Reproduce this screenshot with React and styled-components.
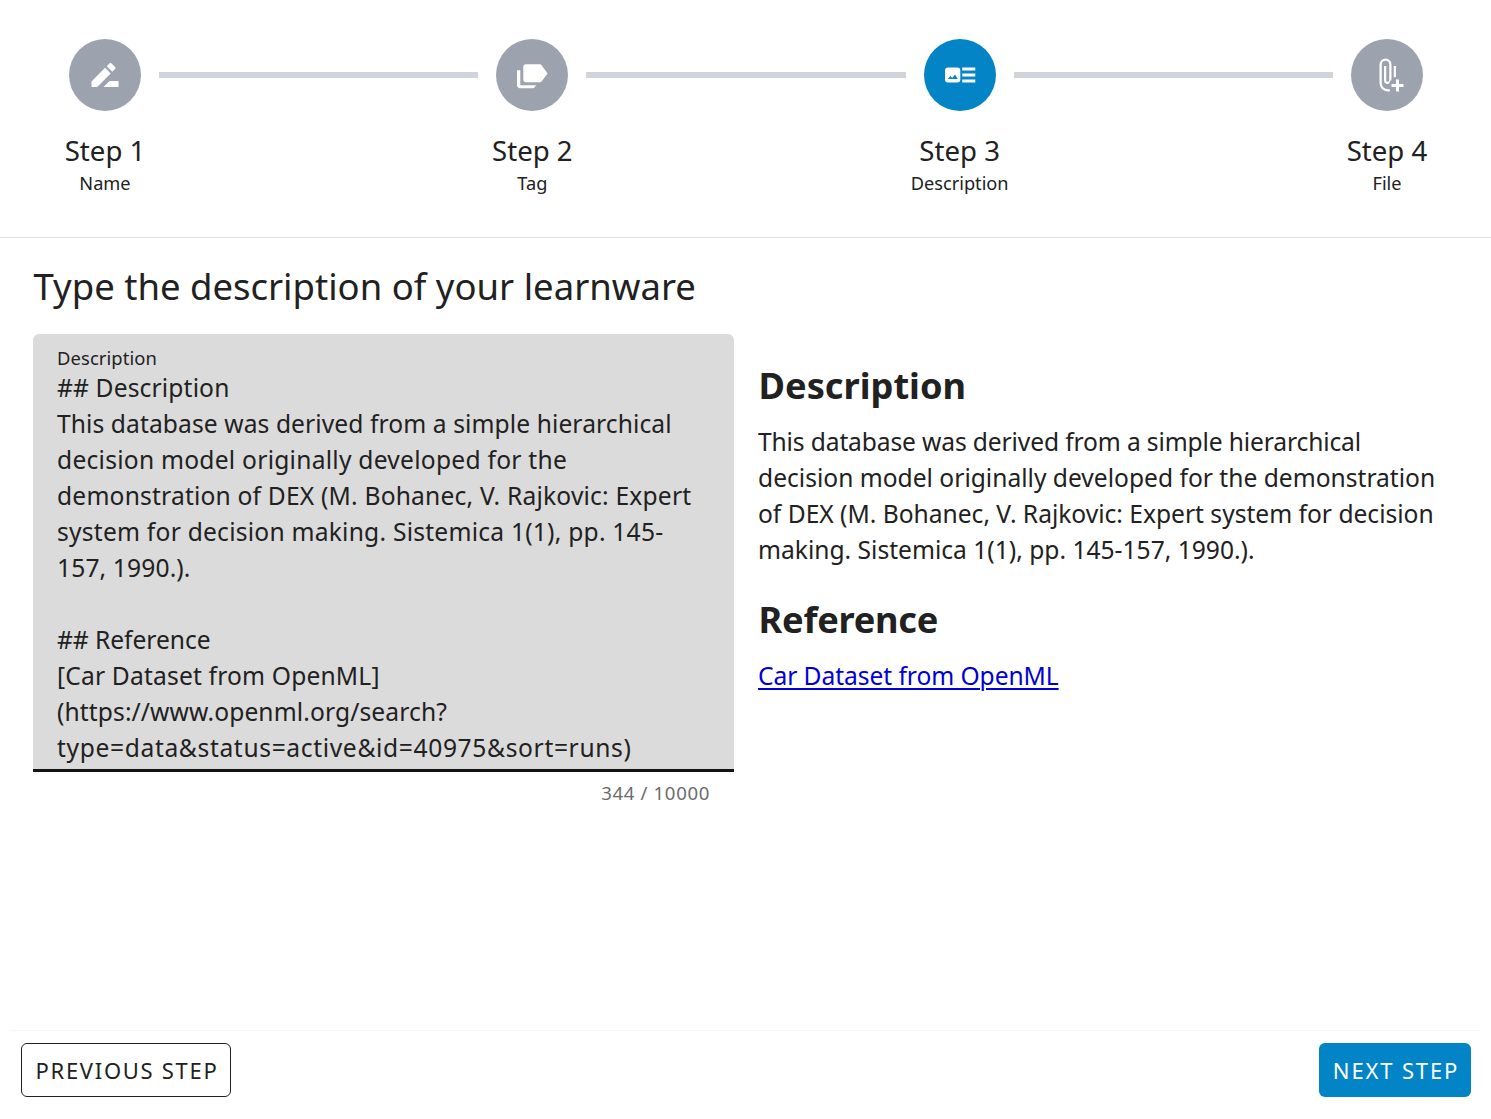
import React from "react";
import styled, { createGlobalStyle } from "styled-components";

const GlobalStyle = createGlobalStyle`
  *, *::before, *::after { box-sizing: border-box; }
  body {
    margin: 0;
    background: #fff;
    color: #212121;
    font-family: "Noto Sans", "Open Sans", sans-serif;
    font-size: 24.6px;
    line-height: 36px;
  }
`;

const Page = styled.div`
  display: flex;
  flex-direction: column;
  height: 1119px;
  overflow: hidden;
`;

const Stepper = styled.header`
  display: flex;
  align-items: flex-start;
  flex: none;
  height: 238px;
  padding: 39px 68px 0 69px;
  border-bottom: 1px solid #dedede;
`;

const Step = styled.div`
  display: flex;
  flex-direction: column;
  align-items: center;
  flex: none;
  width: 72px;
  white-space: nowrap;
`;

const StepCircle = styled.div`
  display: flex;
  align-items: center;
  justify-content: center;
  width: 72px;
  height: 72px;
  margin-bottom: 18px;
  border-radius: 50%;
  color: #fff;
  background: ${(p) => (p.$active ? "#0284c7" : "#9ca3af")};

  svg {
    width: 36px;
    height: 36px;
    fill: currentColor;
  }
`;

const StepTitle = styled.div`
  font-size: 27.6px;
  line-height: 42px;
`;

const StepCaption = styled.div`
  font-size: 18.2px;
  line-height: 24px;
`;

const StepLine = styled.div`
  flex: 1;
  height: 6px;
  margin: 33px 18px 0;
  background: #d1d5db;
`;

const Main = styled.main`
  flex: 1;
  padding: 24px 33px 0;
`;

const Title = styled.h1`
  margin: 0 0 24px;
  padding-left: 0.5px;
  font-size: 36.5px;
  font-weight: 400;
  line-height: 48px;
`;

const Columns = styled.div`
  display: grid;
  grid-template-columns: 701px 1fr;
  column-gap: 24px;
`;

const Field = styled.div`
  height: 438px;
  padding: 12px 24px 0;
  border-bottom: 3px solid #141414;
  border-radius: 6px 6px 0 0;
  background: #dbdbdb;
`;

const FieldLabel = styled.div`
  font-size: 18.4px;
  line-height: 24px;
  letter-spacing: 0.1px;
`;

const Counter = styled.div`
  padding: 9px 24px 0;
  color: #6b6b6b;
  font-size: 18.6px;
  line-height: 24px;
  letter-spacing: 0.65px;
  text-align: right;
`;

const Line = styled.span`
  display: block;
  min-height: 36px;
  letter-spacing: ${(p) => p.$tracking || 0}px;
  white-space: nowrap;
`;

const Preview = styled.article`
  padding-top: 24px;
`;

const PreviewHeading = styled.h2`
  margin: 0 0 12px;
  padding-left: 0.6px;
  font-size: 36.2px;
  font-weight: 700;
  line-height: 54px;
  letter-spacing: ${(p) => p.$tracking || 0}px;
`;

const Paragraph = styled.p`
  margin: 0 0 24px;
`;

const Link = styled.a`
  color: #0000d6;
  letter-spacing: -0.07px;
  text-decoration: underline;
  text-decoration-thickness: 2px;
  text-underline-offset: 3px;
`;

const Footer = styled.footer`
  display: flex;
  justify-content: space-between;
  flex: none;
  height: 89px;
  margin: 0 12px 0 10px;
  padding: 12px 8px 0 11px;
  border-top: 1px solid #f7f7f7;
`;

const Button = styled.button`
  width: ${(p) => p.$width}px;
  height: 54px;
  padding: 0 0 0 2px;
  border: ${(p) => (p.$primary ? "0" : "1px solid #212121")};
  border-radius: 6px;
  color: ${(p) => (p.$primary ? "#fff" : "#212121")};
  background: ${(p) => (p.$primary ? "#0284c7" : "#fff")};
  font-family: inherit;
  font-size: 22px;
  line-height: 36px;
  letter-spacing: ${(p) => (p.$primary ? 1.85 : 1.7)}px;
  white-space: nowrap;
`;

const RenameIcon = () => (
  <svg viewBox="0 0 24 24">
    <path d="M15 16L11 20H21V16H15M12.06 7.19L3 16.25V20H6.75L15.81 10.94L12.06 7.19M18.71 8.04C19.1 7.65 19.1 7 18.71 6.63L16.37 4.29C16.17 4.09 15.92 4 15.66 4C15.41 4 15.15 4.1 14.96 4.29L13.13 6.12L16.88 9.87L18.71 8.04Z" />
  </svg>
);

const LabelsIcon = () => (
  <svg viewBox="0 0 24 24">
    <path d="M7.8 4.9H17.2C17.7 4.9 18.2 5.2 18.5 5.6L22.4 11L18.5 16.2C18.2 16.6 17.7 16.9 17.2 16.9H7.8C6.9 16.9 6.2 16.1 6.2 15.2V6.6C6.2 5.7 6.9 4.9 7.8 4.9Z" />
    <path d="M2 8.8H4.2V18.8H14.9L13.5 20.3Q13 20.8 12.4 20.8H4C2.9 20.8 2 20 2 18.9Z" />
  </svg>
);

const ImageTextIcon = () => (
  <svg viewBox="0 0 24 24">
    <path d="M22.2 13H13.5V11H22.2M22.2 7H13.5V9H22.2M13.5 17H22.2V15H13.5M12.2 9V15A2 2 0 0 1 10.2 17H4A2 2 0 0 1 2 15V9A2 2 0 0 1 4 7H10.2A2 2 0 0 1 12.2 9M10.5 14.7L8.7 11.7L6.8 14L5.6 12.7L3.8 14.7H10.5Z" />
  </svg>
);

const PaperclipPlusIcon = () => (
  <svg viewBox="0 0 24 24">
    <path d="M16.5 6H18V13.1L16.5 13.6Z" />
    <path d="M14.2 22.75Q13.4 23 12.5 23A5.5 5.5 0 0 1 7 17.5V5A4 4 0 0 1 15 5V14.8Q13.8 16 13.3 17.9Q12.9 18 12.5 18A2.5 2.5 0 0 1 10 15.5V6H11.5V15.5A1 1 0 0 0 13.5 15.5V5A2.5 2.5 0 0 0 8.5 5V17.5A4 4 0 0 0 12.5 21.5Q13.1 21.5 13.6 21.35Z" />
    <path d="M18 15H20V18H23V20H20V23H18V20H15V18H18Z" />
  </svg>
);

const steps = [
  { title: "Step 1", caption: "Name", Icon: RenameIcon },
  { title: "Step 2", caption: "Tag", Icon: LabelsIcon },
  { title: "Step 3", caption: "Description", Icon: ImageTextIcon, active: true },
  { title: "Step 4", caption: "File", Icon: PaperclipPlusIcon },
];

const sourceLines = [
  ["## Description", 0.14],
  ["This database was derived from a simple hierarchical", 0.09],
  ["decision model originally developed for the", 0.25],
  ["demonstration of DEX (M. Bohanec, V. Rajkovic: Expert", 0.19],
  ["system for decision making. Sistemica 1(1), pp. 145-", 0.23],
  ["157, 1990.).", 0.13],
  ["", 0],
  ["## Reference", -0.05],
  ["[Car Dataset from OpenML]", 0.17],
  ["(https://www.openml.org/search?", 0.11],
  ["type=data&status=active&id=40975&sort=runs)", 0.64],
];

const previewLines = [
  ["This database was derived from a simple hierarchical", -0.134],
  ["decision model originally developed for the demonstration", 0],
  ["of DEX (M. Bohanec, V. Rajkovic: Expert system for decision", -0.01],
  ["making. Sistemica 1(1), pp. 145-157, 1990.).", 0],
];

const Lines = ({ items }) =>
  items.map(([text, tracking], i) => (
    <Line key={i} $tracking={tracking}>
      {text}
    </Line>
  ));

export default function App() {
  return (
    <Page>
      <GlobalStyle />
      <Stepper>
        {steps.map(({ title, caption, Icon, active }, i) => (
          <React.Fragment key={title}>
            {i > 0 && <StepLine />}
            <Step>
              <StepCircle $active={active}>
                <Icon />
              </StepCircle>
              <StepTitle>{title}</StepTitle>
              <StepCaption>{caption}</StepCaption>
            </Step>
          </React.Fragment>
        ))}
      </Stepper>
      <Main>
        <Title>Type the description of your learnware</Title>
        <Columns>
          <div>
            <Field>
              <FieldLabel>Description</FieldLabel>
              <Lines items={sourceLines} />
            </Field>
            <Counter>344 / 10000</Counter>
          </div>
          <Preview>
            <PreviewHeading>Description</PreviewHeading>
            <Paragraph>
              <Lines items={previewLines} />
            </Paragraph>
            <PreviewHeading $tracking={-0.25}>Reference</PreviewHeading>
            <Paragraph>
              <Link href="#">Car Dataset from OpenML</Link>
            </Paragraph>
          </Preview>
        </Columns>
      </Main>
      <Footer>
        <Button $width={210}>PREVIOUS STEP</Button>
        <Button $width={152} $primary>
          NEXT STEP
        </Button>
      </Footer>
    </Page>
  );
}
